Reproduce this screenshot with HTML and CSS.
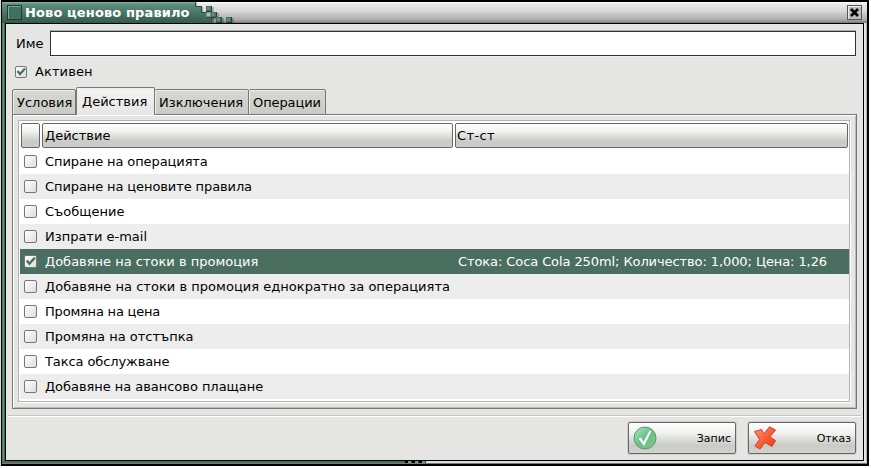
FILE: index.html
```html
<!DOCTYPE html>
<html lang="bg">
<head>
<meta charset="utf-8">
<title>Ново ценово правило</title>
<link rel="stylesheet" href="styles.css">
</head>
<body>
<div class="desktop">
<div class="window">
  <header class="titlebar">
    <div class="caption"><i class="sysmenu"></i><span>Ново ценово правило</span></div>
    <svg class="cubes" width="46" height="21" viewBox="0 0 46 21" shape-rendering="crispEdges">
      <defs>
        <linearGradient id="cap" gradientUnits="userSpaceOnUse" x1="0" y1="0" x2="0" y2="21"><stop offset="0" stop-color="#8bb5a5"/><stop offset=".1" stop-color="#608f7f"/><stop offset=".5" stop-color="#4b7867"/><stop offset="1" stop-color="#355a4c"/></linearGradient>
        <g id="cube"><path d="M1 1h7v7H1z" fill="#000" opacity=".22"/><path d="M0 0h6v6H0z" fill="#24423a"/><path d="M0 0h5v5H0z" fill="#47705f"/><path d="M1 1h3v3H1z" fill="#5f8c7c"/></g>
      </defs>
      <path d="M0 0h4v5h6v6h5v5h6v5H0z" fill="#000" opacity=".25"/>
      <path d="M0 0h2v4h6v6h5v5h5v6H0z" fill="url(#cap)"/>
      <path d="M2 0v4h6v6h5v5h5v6" fill="none" stroke="#2c4c41"/>
      <use href="#cube" x="13" y="4"/><use href="#cube" x="18" y="10"/><use href="#cube" x="23" y="15"/><use href="#cube" x="33" y="15"/>
      <path d="M13 10h5v5h-5z" fill="#7d8f89"/><path d="M14 11h3v3h-3z" fill="#b4b8b6"/>
    </svg>
    <button class="close" aria-label="Затвори"><svg width="15" height="15" viewBox="0 0 15 15"><path d="M4 4l7 7M11 4l-7 7" stroke="#000" stroke-width="2.6"/></svg></button>
  </header>
  <main class="client">
    <div class="name"><label>Име</label><div class="entry"></div></div>
    <div class="active"><i class="check"><svg width="12" height="12" viewBox="0 0 12 12"><path d="M2.500 5l2.500 3 5-5.500" fill="none" stroke="#4a6f61" stroke-width="2.200"/></svg></i><span>Активен</span></div>
    <nav class="tabs"><div class="tab t1">Условия</div><div class="tab on">Действия</div><div class="tab t3">Изключения</div><div class="tab t4">Операции</div></nav>
    <section class="page"><div class="list">
      <div class="row head"><span></span><span>Действие</span><span>Ст-ст</span></div>
      <div class="row"><i class="check"></i><span class="tight">Спиране на операцията</span></div>
      <div class="row"><i class="check"></i><span class="tight">Спиране на ценовите правила</span></div>
      <div class="row"><i class="check"></i><span>Съобщение</span></div>
      <div class="row"><i class="check"></i><span>Изпрати e-mail</span></div>
      <div class="row selected"><i class="check"><svg width="13" height="13" viewBox="0 0 12 12"><path d="M2.500 5l2.500 3 5-5.500" fill="none" stroke="#4a6f61" stroke-width="2.200"/></svg></i><span>Добавяне на стоки в промоция</span><span class="value">Стока: Coca Cola 250ml; Количество: 1,000; Цена: 1,26</span></div>
      <div class="row"><i class="check"></i><span class="wide">Добавяне на стоки в промоция еднократно за операцията</span></div>
      <div class="row"><i class="check"></i><span class="tighter">Промяна на цена</span></div>
      <div class="row"><i class="check"></i><span>Промяна на отстъпка</span></div>
      <div class="row"><i class="check"></i><span class="tight">Такса обслужване</span></div>
      <div class="row"><i class="check"></i><span class="slim">Добавяне на авансово плащане</span></div>
    </div></section>
    <footer class="actions">
      <button class="btn"><svg width="24" height="24" viewBox="0 0 24 24"><defs><linearGradient id="g" x1="0" y1="0" x2="1" y2="1"><stop offset="0" stop-color="#a5f0c4"/><stop offset=".5" stop-color="#69bd88"/><stop offset="1" stop-color="#8cc98a"/></linearGradient></defs><circle cx="12" cy="12" r="11" fill="url(#g)" stroke="#5b9a6f"/><path d="M5.500 12.500l2.500-1 2.500 4.500L16.500 4.500l2 .5L11 20z" fill="#fff"/></svg><span>Запис</span></button>
      <button class="btn"><svg width="24" height="24" viewBox="0 0 24 24"><defs><linearGradient id="r" x1="0" y1="0" x2="1" y2="1"><stop offset="0" stop-color="#ff9a70"/><stop offset=".45" stop-color="#fb6540"/><stop offset="1" stop-color="#ff3300"/></linearGradient></defs><path d="M1.500 5.500L8.500 3.500 11 8 16.500 .8 22.500 4 16.800 11 22.500 14.500 19 20.500 12 16.500 7 23 2 20 6.500 13.500z" fill="url(#r)" stroke="#c0432c" stroke-linejoin="round"/></svg><span>Отказ</span></button>
    </footer>
  </main>
  <div class="sill"><i></i><i></i><i></i></div>
</div>
</div>
</body>
</html>
```
FILE: styles.css
```css
* { box-sizing: border-box; }
body { margin: 0; background: #fff; font: 13px/16px "DejaVu Sans", sans-serif; color: #000; }
.desktop { width: 869px; height: 466px; background: #000; padding-top: 1px; border-left: 1px solid #d8dad6; }
.window {
  width: 865px; height: 462px; margin-top: 1px; margin-left: 1px; display: grid;
  grid-template-columns: 3px 859px 3px; grid-template-rows: 21px 438px 3px;
  background: linear-gradient(90deg, #2f5547, #6d9c8b 1px, #4f7f6d 2px, #2f5547 3px, #000 3px, #000 862px, #eee 862px, #ddd 864px, #888 865px);
}
.titlebar { grid-column: 1 / 4; display: flex; background: linear-gradient(#fff, #e9e9e9 2px, #d8d8d8 9px, #aaa 18px, #777); }
.caption { width: 191px; display: flex; align-items: center; gap: 3px; padding-left: 5px; color: #fff; font-weight: bold; letter-spacing: .12px; white-space: nowrap; background: linear-gradient(#8bb5a5, #608f7f 2px, #4b7867 10px, #355a4c); }
.sysmenu { width: 15px; height: 15px; background: #41705f; border: 1px solid #1d3a30; box-shadow: inset 1px 1px #7fa998; }
.close { width: 15px; height: 15px; padding: 0; margin: 3px 5px 0 auto; border: 1px solid #555; background: #bbb; box-shadow: inset 1px 1px #eee; }
.close svg { display: block; margin: -1px; }
.client { grid-column: 2; margin: 1px; width: 857px; height: 436px; background: #e5e5e3; overflow: hidden; }
.name { display: flex; align-items: center; height: 25px; margin: 7px 7px 0 10px; }
.name label { width: 34px; }
.entry { flex: 1; height: 25px; background: #fff; border: 1px solid #333; box-shadow: 0 -1px #aaa, 0 1px #f1f1f0; }
.active { display: flex; align-items: center; gap: 8px; margin: 9px 0 0 9px; height: 14px; letter-spacing: .1px; }
.check { width: 12px; height: 12px; flex: none; border: 1px solid #777875; border-radius: 2px; background: linear-gradient(135deg, #fff, #ddd); }
.check svg { display: block; margin: -1px; }
.row .check { width: 13px; height: 13px; }
.tabs { display: flex; align-items: flex-end; height: 28px; margin: 8px 0 -1px 6px; position: relative; z-index: 1; }
.tab { height: 26px; border: 1px solid #777875; border-left-width: 0; border-radius: 2px 2px 0 0; background: linear-gradient(#d7d8d4, #cacbc7); padding: 5px 0 0 4px; box-shadow: inset 1px 1px #eee; white-space: nowrap; }
.t1 { width: 64px; border-left-width: 1px; }
.on { width: 79px; height: 28px; border-bottom: 0; border-left-width: 1px; background: linear-gradient(#f4f4f3, #e5e5e3); padding: 6px 0 0 5px; }
.t3 { width: 94px; }
.t4 { width: 77px; letter-spacing: -.1px; }
.page { width: 845px; height: 295px; margin-left: 6px; padding: 5px; border: 1px solid #777875; box-shadow: inset 1px 1px #fff, inset -1px -1px #bbb; }
.list { width: 832px; height: 282px; border: 1px solid #b2b3af; background: #fff; padding: 2px 0 0 1px; box-shadow: 1px 1px #fff; }
.row { display: flex; align-items: center; height: 25px; padding-left: 4px; white-space: nowrap; }
.row > span { margin-left: 8px; }
.row .slim { letter-spacing: -.04px; }
.row .tight { letter-spacing: -.1px; }
.row .tighter { letter-spacing: -.2px; }
.row .wide { letter-spacing: .03px; }
.row:nth-child(odd) { background: #ededed; }
.row.selected { background: #4a6f61; color: #fff; }
.row .value { margin-left: auto; margin-right: 22px; letter-spacing: -.09px; }
.row.head { height: 25px; padding: 0 0 0 1px; background: #fff; gap: 2px; margin-bottom: 1px; }
.row.head span { height: 25px; margin: 0; border: 1px solid #666763; border-radius: 2px; background: linear-gradient(#fff, #f3f3f2 30%, #c9cbc6 75%, #cbcdc8); padding: 4px 0 0 1px; }
.row.head span:nth-child(1) { width: 19px; }
.row.head span:nth-child(2) { width: 411px; padding-left: 2px; }
.row.head span:nth-child(3) { width: 393px; letter-spacing: .4px; }
.actions { display: flex; justify-content: flex-end; gap: 12px; margin: 6px 2px 0; padding: 6px 5px 0; height: 45px; border-top: 1px solid #c5c5c3; box-shadow: inset 0 1px #fff; }
.btn { display: flex; align-items: center; justify-content: space-between; width: 108px; height: 32px; padding: 0 4px; border: 1px solid #666763; border-radius: 2px; background: linear-gradient(#fff, #f0f0ef 35%, #c9cbc6 75%, #d0d2cd); font: 11px "DejaVu Sans", sans-serif; color: #000; box-shadow: 0 0 0 1px #d0d0ce; }
.sill { grid-column: 1 / 4; display: flex; gap: 3px; padding-left: 406px; background: linear-gradient(90deg, #47705f 403px, #000 403px, #000 423px, #ddd 423px); border-bottom: 1px solid #777; }
.sill i { width: 4px; background: #709f8e; border-right: 1px solid #294d40; }
```
